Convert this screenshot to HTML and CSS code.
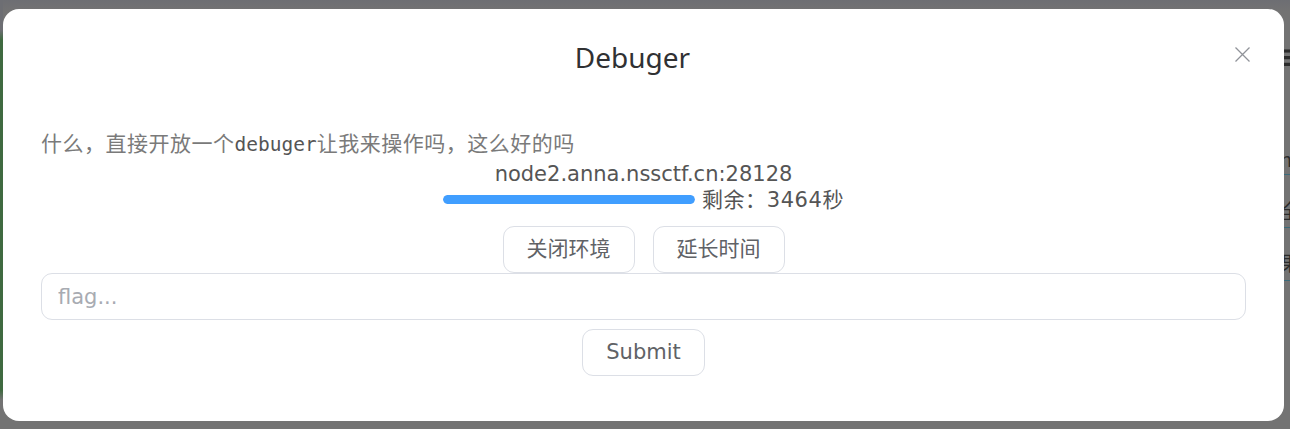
FILE: index.html
```html
<!DOCTYPE html>
<html lang="zh">
<head>
<meta charset="utf-8">
<title>Debuger</title>
<link rel="stylesheet" href="styles.css">
</head>
<body>
<div class="screen">
  <div class="edge-left"></div>
  <div class="dialog">
    <div class="dialog-header">
      <span class="dialog-title">Debuger</span>
    </div>
    <button class="close" aria-label="close">
      <svg width="15" height="15" viewBox="0 0 15 15"><path d="M0.5 0.5L14.5 14.5M14.5 0.5L0.5 14.5" stroke="#909399" stroke-width="1.3" fill="none"/></svg>
    </button>
    <div class="dialog-body">
      <p class="desc">什么，直接开放一个<code>debuger</code>让我来操作吗，这么好的吗</p>
      <div class="addr">node2.anna.nssctf.cn:28128</div>
      <div class="remain-row">
        <div class="bar"><div class="bar-fill" style="width:100%"></div></div>
        <span class="remain">剩余：3464秒</span>
      </div>
      <div class="actions">
        <button class="btn">关闭环境</button>
        <button class="btn">延长时间</button>
      </div>
      <input class="flag" type="text" placeholder="flag...">
      <div class="submit-row">
        <button class="btn btn-submit">Submit</button>
      </div>
    </div>
  </div>
  <div class="edge-right">
    <div class="bg-line l1">☰</div>
    <div class="bg-line l2">n</div>
    <div class="bg-line l3">全</div>
    <div class="bg-line l4">果</div>
  </div>
</div>
</body>
</html>
```

FILE: styles.css
```css
* { box-sizing: border-box; }
html, body {
  margin: 0;
  padding: 0;
  width: 1290px;
  height: 429px;
  overflow: hidden;
  background: #737373;
  font-family: "DejaVu Sans", "Noto Sans CJK SC", sans-serif;
}
.screen {
  display: flex;
  width: 1290px;
  height: 429px;
  background: linear-gradient(#6d6e73 0, #737373 12px);
}
.edge-left {
  width: 3px;
  flex: none;
  background: linear-gradient(#6d6e73 0, #6d6e73 30px, #3f6a40 40px, #3f6a40 390px, #737373 400px);
}
.dialog {
  position: relative;
  flex: none;
  width: 1281px;
  height: 412px;
  margin-top: 9px;
  background: #fff;
  border-radius: 16px;
  padding: 31px 38px 45px 38px;
}
.dialog-header {
  height: 34px;
  padding-right: 22px;
  text-align: center;
}
.dialog-title {
  font-family: "Noto Sans", sans-serif;
  font-size: 28px;
  line-height: 34px;
  color: #303133;
}
.close {
  position: absolute;
  top: 38px;
  right: 34px;
  width: 15px;
  height: 15px;
  padding: 0;
  border: 0;
  background: none;
  display: flex;
}
.dialog-body {
  display: flex;
  flex-direction: column;
  align-items: stretch;
}
.desc {
  margin: 53px 0 0 0;
  height: 30px;
  font-family: "Noto Sans CJK SC", sans-serif;
  font-size: 21px;
  line-height: 30px;
  color: #7a7a7a;
  letter-spacing: 0.5px;
  white-space: nowrap;
}
.desc code {
  font-family: "DejaVu Sans Mono", "Liberation Mono", monospace;
  font-size: 19.5px;
  line-height: 1;
  color: #555;
  letter-spacing: 0;
}
.addr {
  height: 26px;
  margin-top: 4px;
  text-align: center;
  font-size: 21px;
  line-height: 26px;
  color: #555;
}
.remain-row {
  display: flex;
  justify-content: center;
  align-items: center;
  gap: 7px;
  height: 26px;
}
.bar {
  width: 252px;
  height: 9px;
  border-radius: 5px;
  background: #ebeef5;
  overflow: hidden;
  margin-top: -1px;
}
.bar-fill {
  height: 100%;
  background: #409eff;
  border-radius: 5px;
}
.remain {
  font-size: 21px;
  line-height: 26px;
  letter-spacing: 0.6px;
  color: #555;
}
.actions {
  display: flex;
  justify-content: center;
  gap: 18px;
  margin-top: 13px;
}
.btn {
  height: 47px;
  padding: 0 22px;
  border: 1px solid #dcdfe6;
  border-radius: 11px;
  background: #fff;
  color: #606266;
  font-family: "DejaVu Sans", "Noto Sans CJK SC", sans-serif;
  font-size: 21px;
  line-height: 1;
}
.actions .btn { width: 132px; padding: 0; }
.flag {
  width: 100%;
  height: 47px;
  margin: 0;
  border: 1px solid #dcdfe6;
  border-radius: 11px;
  padding: 0 16px;
  font-family: "DejaVu Sans", sans-serif;
  font-size: 21px;
  color: #606266;
  outline: none;
}
.flag::placeholder { color: #a8abb2; }
.submit-row {
  display: flex;
  justify-content: center;
  margin-top: 9px;
}
.btn-submit { width: 123px; padding: 0; }
.edge-right {
  flex: 1;
  position: relative;
  overflow: hidden;
  height: 429px;
}
.bg-line {
  position: absolute;
  left: -4px;
  color: #2b2b2b;
  font-family: "Noto Sans CJK SC", sans-serif;
  font-size: 20px;
  line-height: 26px;
  width: 30px;
}
.l1 { top: 44px; }
.l2 { top: 146px; border-bottom: 1px solid #3b6b7a; height: 29px; }
.l3 { top: 198px; border-bottom: 1px solid #3b6b7a; height: 30px; }
.l4 { top: 250px; border-bottom: 1px solid #3b6b7a; height: 31px; }
```
